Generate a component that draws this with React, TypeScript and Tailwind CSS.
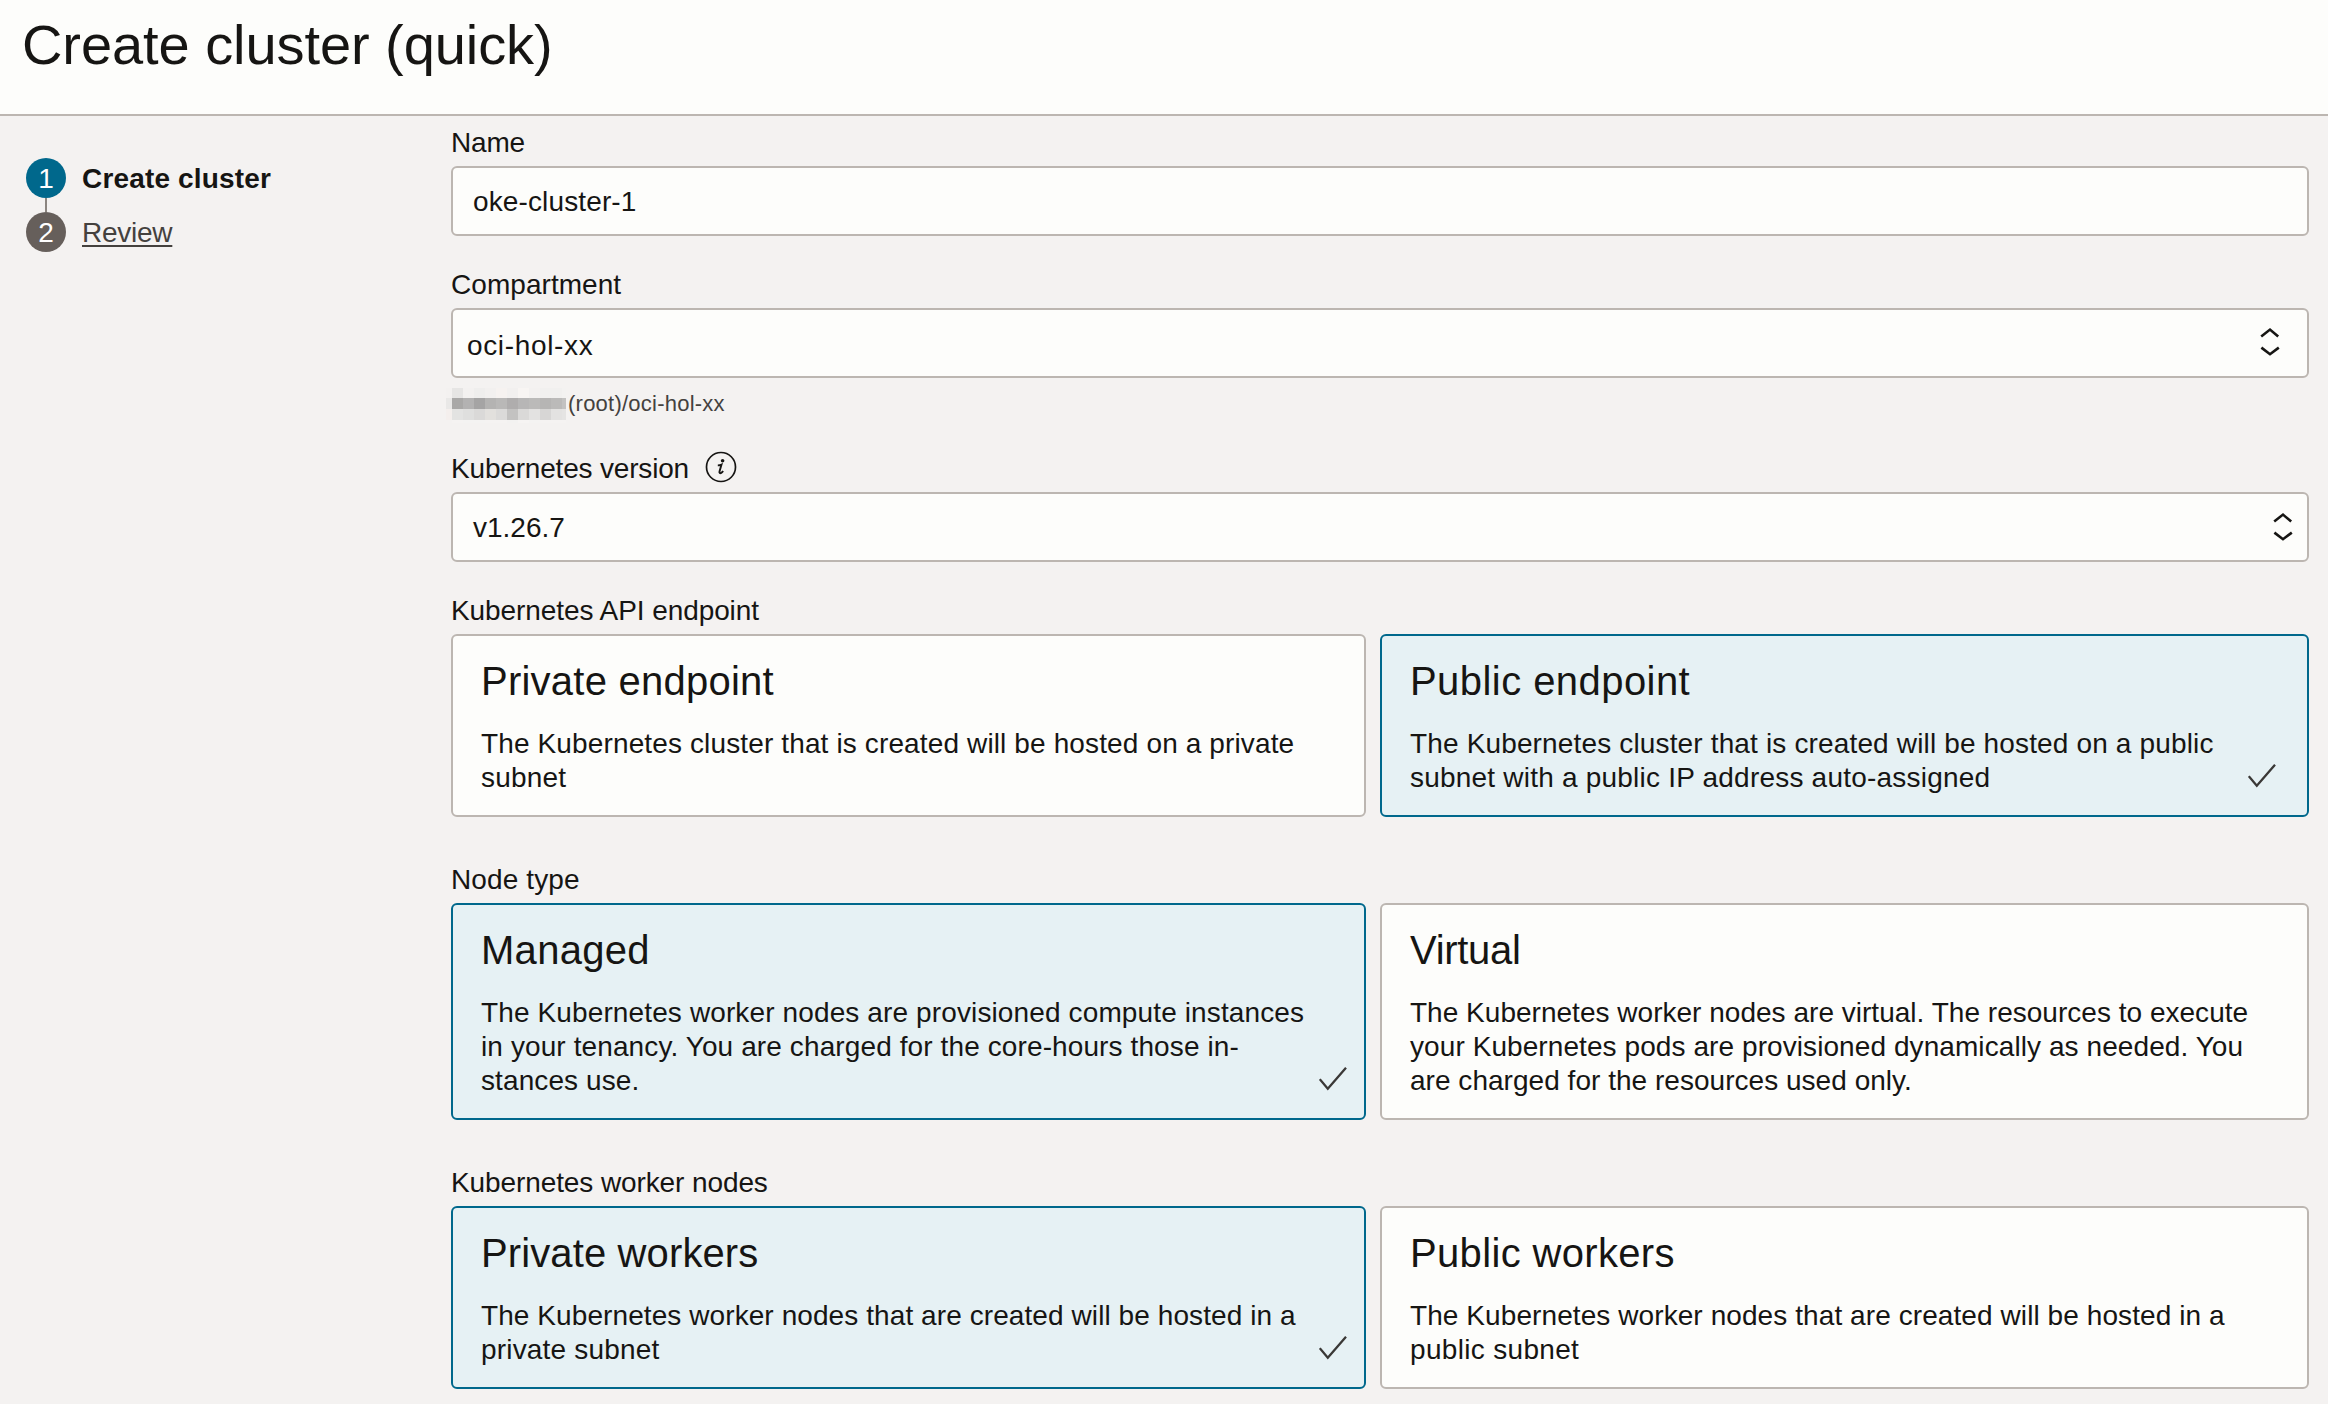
import React from "react";

type Line = [text: string, tracking: string];

type Option = {
  title: string;
  titleTracking: string;
  lines: Line[];
  selected?: boolean;
};

const groups: { label: string; tracking: string; options: [Option, Option] }[] = [
  {
    label: "Kubernetes API endpoint",
    tracking: "tracking-[-0.08px]",
    options: [
      {
        title: "Private endpoint",
        titleTracking: "tracking-[0.24px]",
        lines: [
          ["The Kubernetes cluster that is created will be hosted on a private", "tracking-[0.131px]"],
          ["subnet", "tracking-[0.2px]"],
        ],
      },
      {
        title: "Public endpoint",
        titleTracking: "tracking-[0.44px]",
        lines: [
          ["The Kubernetes cluster that is created will be hosted on a public", "tracking-[0.15px]"],
          ["subnet with a public IP address auto-assigned", "tracking-[0.212px]"],
        ],
        selected: true,
      },
    ],
  },
  {
    label: "Node type",
    tracking: "tracking-[0.116px]",
    options: [
      {
        title: "Managed",
        titleTracking: "tracking-[0.3px]",
        lines: [
          ["The Kubernetes worker nodes are provisioned compute instances", "tracking-[0.124px]"],
          ["in your tenancy. You are charged for the core-hours those in-", "tracking-[0.109px]"],
          ["stances use.", "tracking-[0.1px]"],
        ],
        selected: true,
      },
      {
        title: "Virtual",
        titleTracking: "tracking-[-0.295px]",
        lines: [
          ["The Kubernetes worker nodes are virtual. The resources to execute", "tracking-[0.02px]"],
          ["your Kubernetes pods are provisioned dynamically as needed. You", "tracking-[0.08px]"],
          ["are charged for the resources used only.", "tracking-[0.03px]"],
        ],
      },
    ],
  },
  {
    label: "Kubernetes worker nodes",
    tracking: "tracking-[-0.1px]",
    options: [
      {
        title: "Private workers",
        titleTracking: "tracking-[0.12px]",
        lines: [
          ["The Kubernetes worker nodes that are created will be hosted in a", "tracking-[0.083px]"],
          ["private subnet", "tracking-[0.18px]"],
        ],
        selected: true,
      },
      {
        title: "Public workers",
        titleTracking: "tracking-[0.34px]",
        lines: [
          ["The Kubernetes worker nodes that are created will be hosted in a", "tracking-[0.083px]"],
          ["public subnet", "tracking-[0.32px]"],
        ],
      },
    ],
  },
];

// Greyed-out mosaic that hides the tenancy name in the compartment path.
const mosaic: string[][] = [
  ["#f3f1f0", "#e6e5e4", "#f3f1f0", "#efeeed", "#f2f0ef", "#f6f2f0", "#f2f0ef", "#f8f5f3", "#f3f1f0", "#f1f0ef", "#f1f0ef", "#f3f2f1"],
  ["#e9e8e7", "#a9a8a7", "#b3b2b2", "#a5a4a4", "#b4b3b2", "#b9b8b7", "#afadad", "#b7b6b6", "#bbbab9", "#b6b5b4", "#bbbab9", "#c3c2c1"],
  ["#f4efed", "#e3e3e2", "#dfdfde", "#dad9d8", "#e2e0dd", "#dbdad9", "#c3c2c1", "#dad9d8", "#e3e2e1", "#d7d6d5", "#e3e2e1", "#e5e4e3"],
  ["#f4f2f1", "#f5f3f2", "#f4f3f2", "#f4f3f2", "#f5f3f2", "#f5f3f2", "#f3f2f1", "#f6f4f3", "#f4f3f2", "#f5f3f2", "#f5f3f2", "#f5f3f2"],
];

function Mosaic() {
  return (
    <div className="-ml-[5px] grid h-[35px] w-[120px] grid-cols-[6px_repeat(10,11px)_4px] grid-rows-[10px_11px_11px_3px]">
      {mosaic.flat().map((color, i) => (
        <div key={i} style={{ backgroundColor: color }} />
      ))}
    </div>
  );
}

function Chevrons({ className }: { className: string }) {
  return (
    <svg width="20" height="30" viewBox="0 0 20 30" fill="none" stroke="#161513" strokeWidth="2.6" className={className}>
      <path d="M1.2 9.6 10 2.6l8.2 7" />
      <path d="M1.4 20.6 10 27.2l8.8-6.6" />
    </svg>
  );
}

function Check({ className }: { className: string }) {
  return (
    <svg width="28" height="24" viewBox="0 0 28 24" fill="none" stroke="#3a3836" strokeWidth="2.3" className={className}>
      <path d="M0.8 12.2 8.8 21.8 27 0.8" />
    </svg>
  );
}

function InfoIcon() {
  return (
    <svg width="32" height="32" viewBox="0 0 32 32" className="mb-[4px] ml-4 shrink-0">
      <circle cx="16" cy="16" r="14.5" fill="none" stroke="#161513" strokeWidth="1.7" />
      <circle cx="17.6" cy="9.8" r="1.8" fill="#161513" />
      <path d="M12.8 14.4c1.5 0 2.7-.3 3.7-.8l-2 7c-.4 1.5.6 2 1.7 1.3.8-.5 1.4-1.2 1.9-2" fill="none" stroke="#161513" strokeWidth="1.9" />
    </svg>
  );
}

function Card({ option, last }: { option: Option; last: boolean }) {
  return (
    <div
      className={
        "relative rounded-[6px] border-2 px-7 pt-[21px] pb-5 " +
        (option.selected ? "border-[#00688c] bg-[#e6f1f4]" : "border-[#bcb6b1] bg-[#fdfdfb]")
      }
    >
      <h2 className={"text-[40px] leading-[48px] " + option.titleTracking}>{option.title}</h2>
      <p className="mt-[22px] leading-[34px] whitespace-nowrap">
        {option.lines.map(([text, tracking]) => (
          <span key={text} className={"block " + tracking}>
            {text}
          </span>
        ))}
      </p>
      {option.selected && (
        <Check className={last ? "absolute right-[31px] bottom-[27px]" : "absolute right-[17px] bottom-[27px]"} />
      )}
    </div>
  );
}

export default function App() {
  return (
    <div className="flex h-[1404px] w-[2328px] flex-col overflow-hidden bg-[#f4f2f1] font-['Liberation_Sans',Arial,sans-serif] text-[28px] leading-[34px] text-[#161513]">
      <header className="h-[116px] shrink-0 border-b-2 border-[#bcb6b1] bg-[#fdfdfb] pt-[13px] pl-[22px]">
        <h1 className="text-[56px] leading-[64px] tracking-[-0.072px]">Create cluster (quick)</h1>
      </header>
      <div className="flex">
        <nav className="w-[451px] shrink-0 pt-[42px] pl-[26px] leading-[42px]">
          <div className="flex h-10 gap-4">
            <div className="size-10 rounded-full bg-[#00688c] text-center text-white">1</div>
            <div className="font-bold tracking-[0.165px]">Create cluster</div>
          </div>
          <div className="ml-[19px] h-[14px] w-[2px] bg-[#8b8580]" />
          <div className="flex h-10 gap-4">
            <div className="size-10 rounded-full bg-[#665f5b] text-center text-white">2</div>
            <a className="tracking-[-0.25px] text-[#44413e] underline decoration-2 underline-offset-[3px]">Review</a>
          </div>
        </nav>
        <main className="w-[1858px] pt-[10px]">
          <div className="tracking-[-0.206px]">Name</div>
          <div className="mt-[6px] flex h-[70px] items-start rounded-[6px] border-2 border-[#bcb6b1] bg-[#fdfdfb] pt-[17px] pl-5 tracking-[0.13px]">
            oke-cluster-1
          </div>

          <div className="mt-8 tracking-[0.05px]">Compartment</div>
          <div className="mt-[6px] flex h-[70px] items-start justify-between rounded-[6px] border-2 border-[#bcb6b1] bg-[#fdfdfb] pr-[27px] pl-[14px]">
            <span className="pt-[19px] tracking-[0.65px]">oci-hol-xx</span>
            <Chevrons className="mt-[17px]" />
          </div>
          <div className="mt-[10px] flex h-[35px]">
            <Mosaic />
            <span className="ml-[2px] pt-px text-[22px] leading-[30px] tracking-[0.237px] text-[#44413e]">(root)/oci-hol-xx</span>
          </div>

          <div className="mt-[29px] flex h-[34px] items-center tracking-[-0.18px]">
            Kubernetes version
            <InfoIcon />
          </div>
          <div className="mt-[6px] flex h-[70px] items-start justify-between rounded-[6px] border-2 border-[#bcb6b1] bg-[#fdfdfb] pr-[14px] pl-5">
            <span className="pt-[17px]">v1.26.7</span>
            <Chevrons className="mt-[18px]" />
          </div>

          {groups.map((group, i) => (
            <section key={group.label} className={i === 0 ? "mt-8" : "mt-[46px]"}>
              <div className={group.tracking}>{group.label}</div>
              <div className="mt-[6px] grid grid-cols-[915px_929px] gap-[14px]">
                <Card option={group.options[0]} last={false} />
                <Card option={group.options[1]} last={true} />
              </div>
            </section>
          ))}
        </main>
      </div>
    </div>
  );
}
